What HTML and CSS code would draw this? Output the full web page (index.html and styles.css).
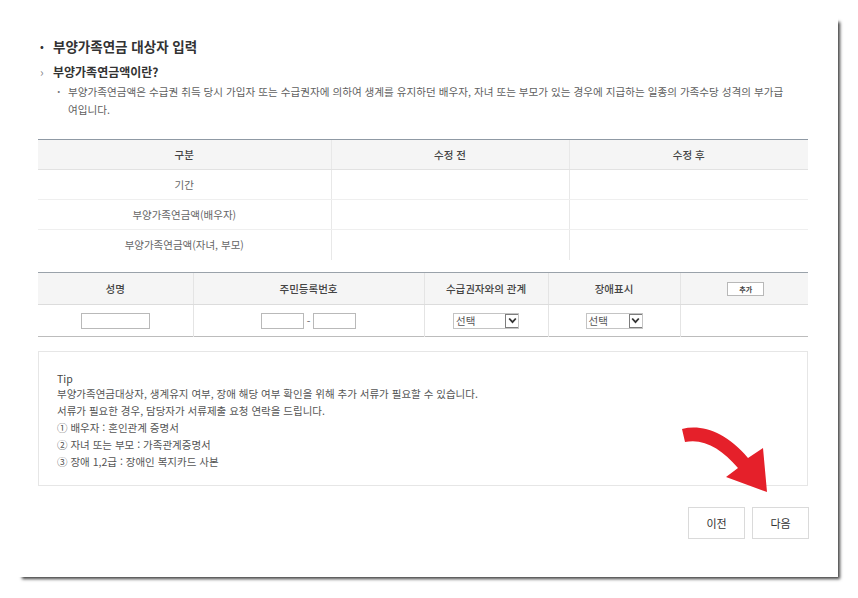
FILE: index.html
```html
<!DOCTYPE html>
<html lang="ko">
<head>
<meta charset="utf-8">
<title>부양가족연금 대상자 입력</title>
<link rel="stylesheet" href="styles.css">
</head>
<body>
<div class="window">
  <h1 class="title"><span class="dot">•</span>부양가족연금 대상자 입력</h1>
  <h2 class="subtitle"><span class="chev">›</span>부양가족연금액이란?</h2>
  <p class="desc"><span class="mini">·</span><span>부양가족연금액은 수급권 취득 당시 가입자 또는 수급권자에 의하여 생계를 유지하던 배우자, 자녀 또는 부모가 있는 경우에 지급하는 일종의 가족수당 성격의 부가급<br>여입니다.</span></p>

  <table class="summary">
    <colgroup><col class="c1"><col class="c2"><col class="c3"></colgroup>
    <thead>
      <tr><th>구분</th><th>수정 전</th><th>수정 후</th></tr>
    </thead>
    <tbody>
      <tr><td>기간</td><td></td><td></td></tr>
      <tr><td>부양가족연금액(배우자)</td><td></td><td></td></tr>
      <tr><td>부양가족연금액(자녀, 부모)</td><td></td><td></td></tr>
    </tbody>
  </table>

  <table class="entry">
    <colgroup><col class="e1"><col class="e2"><col class="e3"><col class="e4"><col class="e5"></colgroup>
    <thead>
      <tr><th>성명</th><th>주민등록번호</th><th>수급권자와의 관계</th><th>장애표시</th><th><span class="add-btn">추가</span></th></tr>
    </thead>
    <tbody>
      <tr>
        <td><input class="inp name" type="text"></td>
        <td><input class="inp rrn" type="text"><span class="dash">-</span><input class="inp rrn" type="text"></td>
        <td><span class="sel"><span class="sel-text">선택</span><span class="sel-arrow"><svg width="11" height="11" viewBox="0 0 11 11"><path d="M2.2 3.5 L5.5 7.2 L8.8 3.5" fill="none" stroke="#333" stroke-width="1.8"/></svg></span></span></td>
        <td><span class="sel sel2"><span class="sel-text">선택</span><span class="sel-arrow"><svg width="11" height="11" viewBox="0 0 11 11"><path d="M2.2 3.5 L5.5 7.2 L8.8 3.5" fill="none" stroke="#333" stroke-width="1.8"/></svg></span></span></td>
        <td></td>
      </tr>
    </tbody>
  </table>

  <div class="tip">
    <p class="tip-head">Tip</p>
    <p>부양가족연금대상자, 생계유지 여부, 장애 해당 여부 확인을 위해 추가 서류가 필요할 수 있습니다.</p>
    <p>서류가 필요한 경우, 담당자가 서류제출 요청 연락을 드립니다.</p>
    <p>① 배우자 : 혼인관계 증명서</p>
    <p>② 자녀 또는 부모 : 가족관계증명서</p>
    <p>③ 장애 1,2급 : 장애인 복지카드 사본</p>
  </div>

  <div class="actions">
    <button class="btn" type="button">이전</button>
    <button class="btn" type="button">다음</button>
  </div>

  <svg class="arrow" width="110" height="80" viewBox="0 0 110 80">
    <path d="M12 9 C32 4 56 12 78 38 L93 28 L97 72 L56 57 L68 48 C52 29 34 18 15 22 Z" fill="#e5202a"/>
  </svg>
</div>
</body>
</html>
```

FILE: styles.css
```css
* { box-sizing: border-box; }
html, body { margin: 0; padding: 0; background: #fff; }
body {
  width: 858px;
  height: 598px;
  overflow: hidden;
  font-family: "Noto Sans CJK KR", "Noto Sans", sans-serif;
  color: #555;
}
.window {
  position: relative;
  width: 838px;
  height: 577px;
  background: #fff;
  box-shadow: 12px 12px 3px -10px rgba(0, 0, 0, 0.75);
  padding: 38px 30px 0 38px;
}
.title {
  margin: 0;
  font-size: 13.5px;
  line-height: 16px;
  font-weight: bold;
  color: #333;
}
.dot {
  display: inline-block;
  width: 15px;
  padding-left: 2px;
  font-size: 10px;
  vertical-align: top;
}
.subtitle {
  margin: 10px 0 0;
  font-size: 12px;
  line-height: 16px;
  font-weight: bold;
  color: #333;
}
.chev {
  display: inline-block;
  width: 15px;
  padding-left: 2px;
  font-weight: normal;
  color: #888;
}
.desc {
  display: flex;
  margin: 3px 0 0;
  padding-left: 19px;
  font-size: 10.6px;
  line-height: 18px;
  color: #5f5f5f;
}
.mini { width: 11px; flex: none; color: #777; font-weight: bold; }

table { border-collapse: collapse; table-layout: fixed; width: 770px; }
th, td { padding: 0; text-align: center; font-size: 10.5px; }
th { font-weight: 500; color: #444; background: #f5f5f5; }

.summary { margin-top: 20px; }
.summary .c1 { width: 293px; }
.summary .c2 { width: 238px; }
.summary .c3 { width: 239px; }
.summary th { height: 30px; border-top: 1px solid #8f99a4; border-bottom: 1px solid #e2e2e2; }
.summary th + th, .summary td + td { border-left: 1px solid #e8e8e8; }
.summary td { height: 30px; color: #666; border-bottom: 1px solid #efefef; }
.summary tr:last-child td { border-bottom: none; }

.entry { margin-top: 12px; border-bottom: 1px solid #bcbcbc; }
.entry .e1 { width: 155px; }
.entry .e2 { width: 231px; }
.entry .e3 { width: 124px; }
.entry .e4 { width: 132px; }
.entry .e5 { width: 128px; }
.entry th { height: 32px; border-top: 1px solid #9aa2aa; border-bottom: 1px solid #dcdcdc; }
.entry th + th, .entry td + td { border-left: 1px solid #e4e4e4; }
.entry td { height: 32px; }

.add-btn {
  display: inline-block;
  width: 37px;
  height: 14px;
  margin-left: 3px;
  border: 1px solid #b8b8b8;
  background: #fff;
  font-size: 7px;
  line-height: 12px;
  font-weight: bold;
  color: #444;
  vertical-align: middle;
}
.inp {
  height: 16px;
  border: 1px solid #b9b9b9;
  background: #fff;
  padding: 0;
  margin: 0;
  vertical-align: middle;
}
.inp.name { width: 69px; }
.inp.rrn { width: 43px; }
.dash { display: inline-block; width: 9px; text-align: center; color: #666; vertical-align: middle; }

.sel {
  display: inline-flex;
  align-items: center;
  justify-content: space-between;
  width: 66px;
  height: 16px;
  border: 1px solid #c4c4c4;
  background: #fff;
  vertical-align: middle;
  text-align: left;
}
.sel2 { width: 57px; }
.sel-text { padding-left: 2px; font-size: 10.5px; color: #555; line-height: 14px; }
.sel-arrow {
  display: flex;
  align-items: center;
  justify-content: center;
  width: 13px;
  height: 14px;
  border: 1px solid #7d7d7d;
  border-right: none;
}

.tip {
  margin-top: 14px;
  height: 135px;
  border: 1px solid #e6e6e6;
  padding: 20px 0 0 18px;
  font-size: 10.5px;
  line-height: 17px;
  color: #555;
}
.tip p { margin: 0; }
.tip .tip-head { line-height: 13px; color: #444; }

.actions {
  display: flex;
  justify-content: flex-end;
  gap: 7px;
  margin-top: 21px;
  margin-right: -1px;
}
.btn {
  width: 57px;
  height: 32px;
  border: 1px solid #dadada;
  background: #fff;
  font-family: "Noto Sans CJK KR", "Noto Sans", sans-serif;
  font-size: 11px;
  color: #333;
  padding: 0;
}
.arrow {
  position: absolute;
  left: 670px;
  top: 420px;
}
```
